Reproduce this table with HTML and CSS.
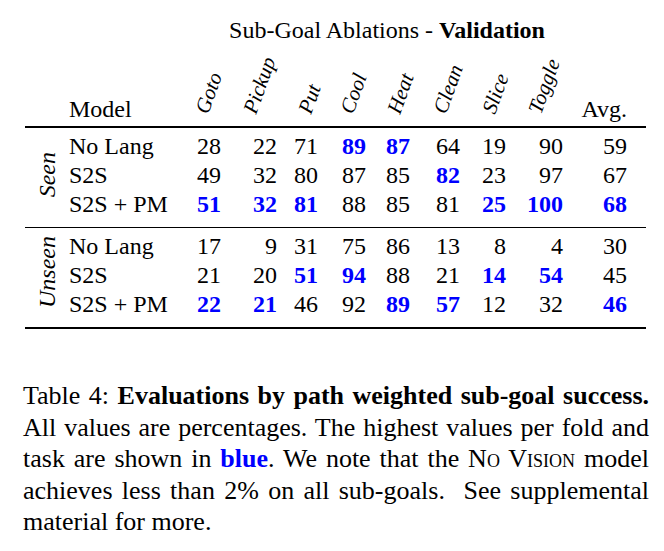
FILE: index.html
```html
<!DOCTYPE html>
<html>
<head>
<meta charset="utf-8">
<link rel="stylesheet" href="styles.css">
</head>
<body>
<div class="page">
  <div class="title-wrap"><div class="title">Sub-Goal Ablations - <b>Validation</b></div></div>
  <div class="table">
    <div class="hcell model">Model</div>
    <div class="hcell"><span class="rot c-goto">Goto</span></div>
    <div class="hcell"><span class="rot c-pickup">Pickup</span></div>
    <div class="hcell"><span class="rot c-put">Put</span></div>
    <div class="hcell"><span class="rot c-cool">Cool</span></div>
    <div class="hcell"><span class="rot c-heat">Heat</span></div>
    <div class="hcell"><span class="rot c-clean">Clean</span></div>
    <div class="hcell"><span class="rot c-slice">Slice</span></div>
    <div class="hcell"><span class="rot c-toggle">Toggle</span></div>
    <div class="hcell">Avg.</div>

    <div class="rule thick top"></div>

    <div class="fold fold-seen">Seen</div>
    <div class="cell model">No Lang</div>
    <div class="cell">28</div><div class="cell">22</div><div class="cell">71</div><div class="cell best">89</div><div class="cell best">87</div><div class="cell">64</div><div class="cell">19</div><div class="cell">90</div><div class="cell">59</div>
    <div class="cell model">S2S</div>
    <div class="cell">49</div><div class="cell">32</div><div class="cell">80</div><div class="cell">87</div><div class="cell">85</div><div class="cell best">82</div><div class="cell">23</div><div class="cell">97</div><div class="cell">67</div>
    <div class="cell model">S2S + PM</div>
    <div class="cell best">51</div><div class="cell best">32</div><div class="cell best">81</div><div class="cell">88</div><div class="cell">85</div><div class="cell">81</div><div class="cell best">25</div><div class="cell best">100</div><div class="cell best">68</div>

    <div class="rule mid"></div>

    <div class="fold fold-unseen">Unseen</div>
    <div class="cell model">No Lang</div>
    <div class="cell">17</div><div class="cell">9</div><div class="cell">31</div><div class="cell">75</div><div class="cell">86</div><div class="cell">13</div><div class="cell">8</div><div class="cell">4</div><div class="cell">30</div>
    <div class="cell model">S2S</div>
    <div class="cell">21</div><div class="cell">20</div><div class="cell best">51</div><div class="cell best">94</div><div class="cell">88</div><div class="cell">21</div><div class="cell best">14</div><div class="cell best">54</div><div class="cell">45</div>
    <div class="cell model">S2S + PM</div>
    <div class="cell best">22</div><div class="cell best">21</div><div class="cell">46</div><div class="cell">92</div><div class="cell best">89</div><div class="cell best">57</div><div class="cell">12</div><div class="cell">32</div><div class="cell best">46</div>

    <div class="rule thick bottom"></div>
  </div>

  <div class="caption">
    <span class="line">Table 4: <b>Evaluations by path weighted sub-goal success.</b></span>
    <span class="line">All values are percentages. The highest values per fold and</span>
    <span class="line">task are shown in <b class="blue">blue</b>. We note that the <span class="sc">No Vision</span> model</span>
    <span class="line">achieves less than 2% on all sub-goals.&nbsp; See supplemental</span>
    <span class="line last">material for more.</span>
  </div>
</div>
</body>
</html>
```

FILE: styles.css
```css
html, body {
  margin: 0;
  padding: 0;
  background: #ffffff;
}

body {
  font-family: "Liberation Serif", "Times New Roman", serif;
  color: #000000;
  font-size: 24px;
}

.page {
  padding: 16px 0 0 25px;
  width: 621px;
}

.title-wrap {
  margin-left: 103px;
  width: 518px;
  display: flex;
  justify-content: center;
}

.title {
  line-height: 29px;
  white-space: nowrap;
}

.table {
  display: grid;
  grid-template-columns: 44px 111px 41px 56px 41px 48px 44px 50px 46px 57px 64px 19px;
}

.hcell {
  height: 76px;
  display: flex;
  justify-content: flex-end;
  align-items: flex-end;
  line-height: 24px;
}

.hcell.model {
  grid-column: 2;
  justify-content: flex-start;
}

.rot {
  display: inline-block;
  width: 0;
  white-space: nowrap;
  font-style: italic;
  font-size: 21px;
  line-height: 24px;
  margin-bottom: 1px;
  transform-origin: 0 19px;
  transform: rotate(-70deg);
}

.c-goto { margin-right: 13.5px; }
.c-pickup { margin-right: 21.5px; }
.c-put { margin-right: 7.5px; }
.c-cool { margin-right: 13.5px; }
.c-heat { margin-right: 10.5px; }
.c-clean { margin-right: 14.5px; }
.c-slice { margin-right: 11.5px; }
.c-toggle { margin-right: 22.5px; }

.rule {
  grid-column: 1 / -1;
  background: #000000;
}

.rule.thick {
  height: 2px;
}

.rule.top {
  margin: 5px 0 4px;
}

.rule.mid {
  height: 1px;
  margin: 8px 0 4px;
}

.rule.bottom {
  margin-top: 8px;
}

.cell {
  line-height: 29px;
  text-align: right;
  white-space: nowrap;
}

.cell.model {
  grid-column: 2;
  text-align: left;
}

.best {
  color: #0000ff;
  font-weight: bold;
}

.fold {
  grid-column: 1;
  align-self: center;
  justify-self: start;
  margin-left: 10px;
  writing-mode: vertical-rl;
  transform: rotate(180deg);
  font-style: italic;
  line-height: 24px;
  white-space: nowrap;
}

.fold-seen {
  grid-row: 3 / span 3;
  margin-bottom: 2px;
}

.fold-unseen {
  grid-row: 7 / span 3;
  margin-bottom: 8px;
}

.caption {
  margin: 51px 0 0 -2px;
  width: 626px;
  font-size: 26px;
  line-height: 31.5px;
}

.line {
  display: block;
  text-align: justify;
  text-align-last: justify;
  white-space: nowrap;
}

.line.last {
  text-align-last: left;
}

.blue {
  color: #0000ff;
}

.sc {
  font-variant: small-caps;
}
```
